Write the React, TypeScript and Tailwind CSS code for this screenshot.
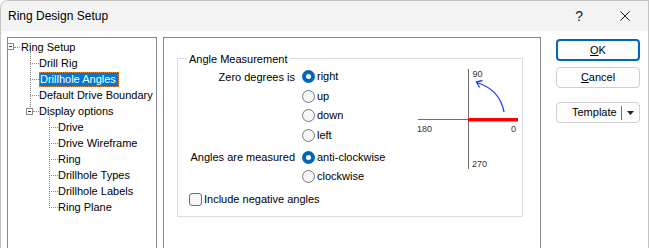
import React from "react";

const font = { fontFamily: '"Liberation Sans", Arial, sans-serif' };

function Radio({ checked, label }: { checked?: boolean; label: string }) {
  return (
    <div className="flex items-center h-full">
      {checked ? (
        <span className="w-[13px] h-[13px] rounded-full bg-[#0067c0] flex items-center justify-center">
          <span className="w-[5px] h-[5px] rounded-full bg-white" />
        </span>
      ) : (
        <span className="w-[13px] h-[13px] rounded-full border border-[#777777] bg-[#f6f6f6]" />
      )}
      <span className="ml-[2px] leading-[13px]">{label}</span>
    </div>
  );
}

type Row = { label: string; level: 0 | 1 | 2; box?: boolean; selected?: boolean };

const rows: Row[] = [
  { label: "Ring Setup", level: 0, box: true },
  { label: "Drill Rig", level: 1 },
  { label: "Drillhole Angles", level: 1, selected: true },
  { label: "Default Drive Boundary", level: 1 },
  { label: "Display options", level: 1, box: true },
  { label: "Drive", level: 2 },
  { label: "Drive Wireframe", level: 2 },
  { label: "Ring", level: 2 },
  { label: "Drillhole Types", level: 2 },
  { label: "Drillhole Labels", level: 2 },
  { label: "Ring Plane", level: 2 },
];

function TreeRow({ r }: { r: Row }) {
  const pl = r.level === 0 ? "pl-[13px]" : r.level === 1 ? "pl-[31px]" : "pl-[50px]";
  return (
    <div className={`relative h-[16px] flex items-center ${pl}`}>
      {r.level === 0 && (
        <>
          <span className="absolute left-[-1px] top-[4px] w-[7px] h-[7px] border border-[#8a8a8a] bg-white flex items-center justify-center">
            <span className="w-[3px] h-px bg-[#333]" />
          </span>
          <span className="absolute left-[6px] top-[8px] w-[6px] border-t border-dotted border-[#8a8a8a]" />
        </>
      )}
      {r.level === 1 && !r.box && (
        <span className="absolute left-[22px] top-[8px] w-[9px] border-t border-dotted border-[#8a8a8a]" />
      )}
      {r.level === 1 && r.box && (
        <>
          <span className="absolute left-[18px] top-[5px] w-[7px] h-[7px] border border-[#8a8a8a] bg-white flex items-center justify-center">
            <span className="w-[3px] h-px bg-[#333]" />
          </span>
          <span className="absolute left-[25px] top-[8px] w-[6px] border-t border-dotted border-[#8a8a8a]" />
        </>
      )}
      {r.level === 2 && (
        <span className="absolute left-[41px] top-[8px] w-[9px] border-t border-dotted border-[#8a8a8a]" />
      )}
      {r.selected ? (
        <span className="h-[15px] mt-[1px] bg-[#0078d7] text-white border border-dotted border-[#e58a3a] pr-[2px] leading-[13px] flex items-center">
          {r.label}
        </span>
      ) : (
        <span className="leading-[13px]">{r.label}</span>
      )}
    </div>
  );
}

export default function App() {
  return (
    <div
      style={font}
      className="w-[649px] h-[248px] overflow-hidden bg-white border-l border-t border-r border-[#c4c4c4] rounded-tl-[8px] text-[11px] text-black"
    >
      {/* Title bar */}
      <div className="h-[30px] bg-[#f3f3f3] flex items-center pl-[7px] text-[12px]">
        <span>Ring Design Setup</span>
        <span className="ml-auto mr-[9px] text-[14px] font-light text-[#1a1a1a]">?</span>
        <svg width="10" height="10" viewBox="0 0 10 10" className="ml-[28px] mr-[18px]">
          <path d="M0.5 0.5 L9.5 9.5 M9.5 0.5 L0.5 9.5" stroke="#1a1a1a" strokeWidth="1" />
        </svg>
      </div>

      {/* Body */}
      <div className="flex pt-[6px]">
        {/* Tree panel */}
        <div className="ml-[6px] w-[150px] h-[230px] border border-[#828790] bg-white">
          <div className="relative pt-[1px]">
            <span className="absolute left-[22px] top-[13px] h-[58px] border-l border-dotted border-[#8a8a8a]" />
            <span className="absolute left-[41px] top-[77px] h-[93px] border-l border-dotted border-[#8a8a8a]" />
            {rows.map((r) => (
              <TreeRow key={r.label} r={r} />
            ))}
          </div>
        </div>

        {/* Settings panel */}
        <div className="ml-[6px] w-[378px] h-[230px] border border-[#828790] bg-white">
          <div className="relative ml-[13px] mt-[20px] w-[346px] h-[159px] border border-[#dcdcdc]">
            <span className="absolute left-[8px] top-[-8px] px-[3px] bg-white leading-[16px]">
              Angle Measurement
            </span>
            <div className="flex">
              <div className="w-[232px] pt-[8px]">
                <div className="flex h-[19.5px]">
                  <div className="w-[117px] text-right flex items-center justify-end">Zero degrees is</div>
                  <div className="ml-[7px]"><Radio checked label="right" /></div>
                </div>
                <div className="flex h-[19.5px]">
                  <div className="w-[117px]" />
                  <div className="ml-[7px]"><Radio label="up" /></div>
                </div>
                <div className="flex h-[19.5px]">
                  <div className="w-[117px]" />
                  <div className="ml-[7px]"><Radio label="down" /></div>
                </div>
                <div className="flex h-[19.5px]">
                  <div className="w-[117px]" />
                  <div className="ml-[7px]"><Radio label="left" /></div>
                </div>
                <div className="flex h-[19px] mt-[2.5px]">
                  <div className="w-[117px] text-right flex items-center justify-end">Angles are measured</div>
                  <div className="ml-[7px]"><Radio checked label="anti-clockwise" /></div>
                </div>
                <div className="flex h-[19px]">
                  <div className="w-[117px]" />
                  <div className="ml-[7px]"><Radio label="clockwise" /></div>
                </div>
                <div className="flex items-center h-[19px] mt-[4px] ml-[11px]">
                  <span className="w-[13px] h-[13px] rounded-[3px] border border-[#6e6e6e] bg-[#f6f6f6]" />
                  <span className="ml-[2px] leading-[13px]">Include negative angles</span>
                </div>
              </div>
              <svg width="111" height="108" viewBox="0 0 111 108" className="mt-[5px]">
                <line x1="58.5" y1="5" x2="58.5" y2="105" stroke="#707070" strokeWidth="1" />
                <line x1="8" y1="55.5" x2="58" y2="55.5" stroke="#707070" strokeWidth="1" />
                <rect x="58" y="54" width="50" height="3.5" fill="#ff0000" />
                <text x="62.5" y="13" fontSize="9" fill="#333" fontFamily="Liberation Sans, Arial, sans-serif">90</text>
                <text x="7" y="67.5" fontSize="9" fill="#333" fontFamily="Liberation Sans, Arial, sans-serif">180</text>
                <text x="101" y="67.5" fontSize="9" fill="#333" fontFamily="Liberation Sans, Arial, sans-serif">0</text>
                <text x="62" y="103" fontSize="9" fill="#333" fontFamily="Liberation Sans, Arial, sans-serif">270</text>
                <path d="M94 48 Q90 26 67 18.5" fill="none" stroke="#1a3cff" strokeWidth="1.3" />
                <path d="M72.5 16.5 L66.5 18 L69.5 23.5" fill="none" stroke="#1a3cff" strokeWidth="1.3" />
              </svg>
            </div>
          </div>
        </div>

        {/* Buttons */}
        <div className="ml-[15px] w-[84px] mt-[2px] flex flex-col">
          <button className="h-[22px] rounded-[4px] border-2 border-[#0067c0] bg-[#fdfdfd] flex items-center justify-center">
            <span><span className="underline">O</span>K</span>
          </button>
          <button className="mt-[6px] h-[21px] rounded-[4px] border border-[#d0d0d0] bg-[#fdfdfd] flex items-center justify-center">
            <span><span className="underline">C</span>ancel</span>
          </button>
          <button className="mt-[14px] h-[21px] rounded-[4px] border border-[#d0d0d0] bg-[#fdfdfd] flex items-center">
            <span className="pl-[15px]">Template</span>
            <span className="ml-auto w-px h-[14px] bg-[#6a6a6a]" />
            <span className="w-[17px] flex items-center justify-center">
              <svg width="7" height="4" viewBox="0 0 7 4">
                <path d="M0 0 L7 0 L3.5 4 Z" fill="#222" />
              </svg>
            </span>
          </button>
        </div>
      </div>
    </div>
  );
}
